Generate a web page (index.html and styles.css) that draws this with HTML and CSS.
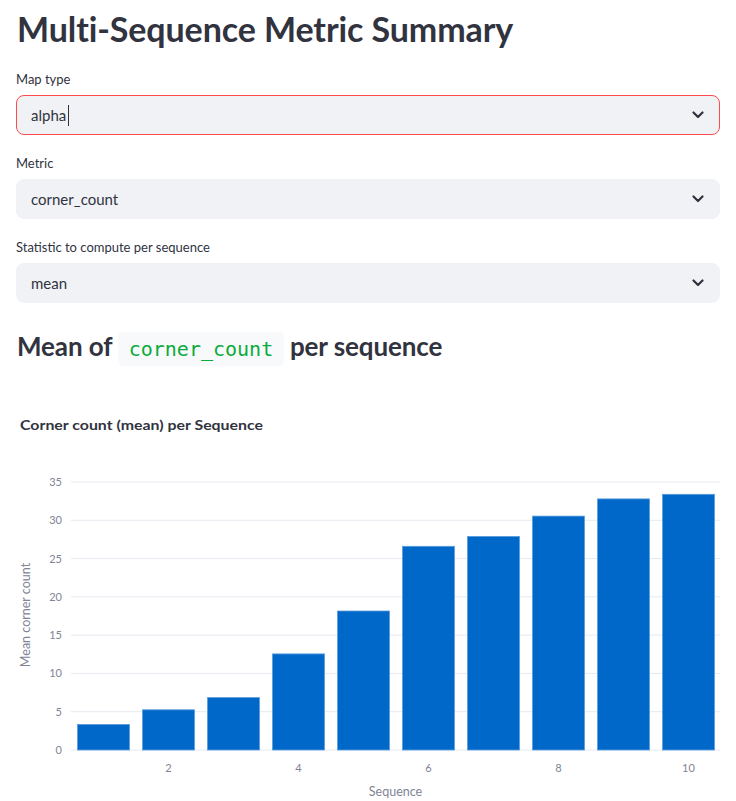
FILE: index.html
```html
<!DOCTYPE html>
<html lang="en">
<head>
<meta charset="utf-8">
<title>Multi-Sequence Metric Summary</title>
<link rel="stylesheet" href="styles.css">
</head>
<body>
<main class="main">
  <h1 class="title">Multi-Sequence Metric Summary</h1>

  <div class="widget">
    <label class="label">Map type</label>
    <div class="select select-focus">
      <span class="value">alpha</span><span class="caret"></span>
      <svg class="chev" width="12" height="8" viewBox="0 0 12 8"><path d="M1.5 1.5 L6 6 L10.5 1.5" fill="none" stroke="#31333f" stroke-width="2.2" stroke-linecap="round" stroke-linejoin="round"/></svg>
    </div>
  </div>

  <div class="widget">
    <label class="label">Metric</label>
    <div class="select">
      <span class="value">corner_count</span>
      <svg class="chev" width="12" height="8" viewBox="0 0 12 8"><path d="M1.5 1.5 L6 6 L10.5 1.5" fill="none" stroke="#31333f" stroke-width="2.2" stroke-linecap="round" stroke-linejoin="round"/></svg>
    </div>
  </div>

  <div class="widget">
    <label class="label">Statistic to compute per sequence</label>
    <div class="select">
      <span class="value">mean</span>
      <svg class="chev" width="12" height="8" viewBox="0 0 12 8"><path d="M1.5 1.5 L6 6 L10.5 1.5" fill="none" stroke="#31333f" stroke-width="2.2" stroke-linecap="round" stroke-linejoin="round"/></svg>
    </div>
  </div>

  <h3 class="subhead">Mean of <code class="code">corner_count</code> per sequence</h3>

  <svg class="chart" width="704" height="421" viewBox="0 0 704 421">
    <text x="4" y="50" class="ctitle" textLength="243" lengthAdjust="spacingAndGlyphs">Corner count (mean) per Sequence</text>
    <g stroke="#e6eaf1" stroke-width="1">
      <line x1="55" x2="704" y1="102" y2="102"/>
      <line x1="55" x2="704" y1="140.3" y2="140.3"/>
      <line x1="55" x2="704" y1="178.6" y2="178.6"/>
      <line x1="55" x2="704" y1="216.8" y2="216.8"/>
      <line x1="55" x2="704" y1="255.1" y2="255.1"/>
      <line x1="55" x2="704" y1="293.4" y2="293.4"/>
      <line x1="55" x2="704" y1="331.7" y2="331.7"/>
      <line x1="55" x2="704" y1="370" y2="370"/>
    </g>
    <g class="ytick" text-anchor="end">
      <text x="46" y="106">35</text>
      <text x="46" y="144.3">30</text>
      <text x="46" y="182.6">25</text>
      <text x="46" y="220.8">20</text>
      <text x="46" y="259.1">15</text>
      <text x="46" y="297.4">10</text>
      <text x="46" y="335.7">5</text>
      <text x="46" y="374">0</text>
    </g>
    <g fill="#0068c9" stroke="#5b9ddc" stroke-width="0.8">
      <rect x="61.5" y="344.4" width="52" height="25.6"/>
      <rect x="126.5" y="329.8" width="52" height="40.2"/>
      <rect x="191.5" y="317.6" width="52" height="52.4"/>
      <rect x="256.5" y="273.9" width="52" height="96.1"/>
      <rect x="321.5" y="231" width="52" height="139"/>
      <rect x="386.5" y="166.3" width="52" height="203.7"/>
      <rect x="451.5" y="156.4" width="52" height="213.6"/>
      <rect x="516.5" y="136.1" width="52" height="233.9"/>
      <rect x="581.5" y="118.9" width="52" height="251.1"/>
      <rect x="646.5" y="114.3" width="52" height="255.7"/>
    </g>
    <g class="xtick" text-anchor="middle">
      <text x="152.5" y="392">2</text>
      <text x="282.5" y="392">4</text>
      <text x="412.5" y="392">6</text>
      <text x="542.5" y="392">8</text>
      <text x="672.5" y="392">10</text>
    </g>
    <text class="axtitle" x="379.5" y="416" text-anchor="middle">Sequence</text>
    <text class="axtitle" transform="translate(14 235) rotate(-90)" text-anchor="middle">Mean corner count</text>
  </svg>
</main>
</body>
</html>
```

FILE: styles.css
```css
html, body {
  margin: 0;
  padding: 0;
  background: #ffffff;
}

body {
  font-family: Lato, "Noto Sans", "DejaVu Sans", sans-serif;
  color: #31333f;
}

.main {
  padding: 0 16px;
  display: flex;
  flex-direction: column;
}

.title {
  margin: 0;
  padding-top: 5px;
  font-size: 34px;
  line-height: 48px;
  font-weight: 700;
  letter-spacing: -0.1px;
  margin-bottom: 14px;
  margin-left: 1px;
}

.widget {
  display: flex;
  flex-direction: column;
  margin-bottom: 16px;
}

.label {
  font-size: 13px;
  line-height: 24px;
  margin-bottom: 4px;
}

.select {
  height: 40px;
  box-sizing: border-box;
  background: #f0f2f6;
  border: 1px solid #f0f2f6;
  border-radius: 8px;
  display: flex;
  align-items: center;
  padding: 0 14px 0 14px;
  font-size: 15px;
}

.select-focus {
  border-color: #ff4b4b;
}

.value {
  color: #31333f;
}

.caret {
  display: inline-block;
  width: 1px;
  height: 21px;
  background: #31333f;
  margin-left: 2px;
}

.chev {
  margin-left: auto;
  margin-right: 1px;
}

.subhead {
  margin: 7px 0 0 1px;
  font-size: 26px;
  line-height: 40px;
  font-weight: 700;
  letter-spacing: -0.1px;
}

.code {
  font-family: "DejaVu Sans Mono", "Liberation Mono", monospace;
  font-weight: 400;
  font-size: 20px;
  color: #09ab3b;
  background: #f8f9fb;
  border-radius: 5px;
  padding: 5px 10.5px;
  margin: 0;
  letter-spacing: 0;
}

.chart {
  display: block;
  margin-top: 11px;
}

.ctitle {
  font-family: Lato, "Noto Sans", sans-serif;
  font-weight: 700;
  font-size: 14px;
  fill: #31333f;
}

.ytick text, .xtick text {
  font-family: Lato, "Noto Sans", sans-serif;
  font-size: 11px;
  fill: #808495;
}

.axtitle {
  font-family: Lato, "Noto Sans", sans-serif;
  font-size: 12.5px;
  fill: #808495;
}
```
